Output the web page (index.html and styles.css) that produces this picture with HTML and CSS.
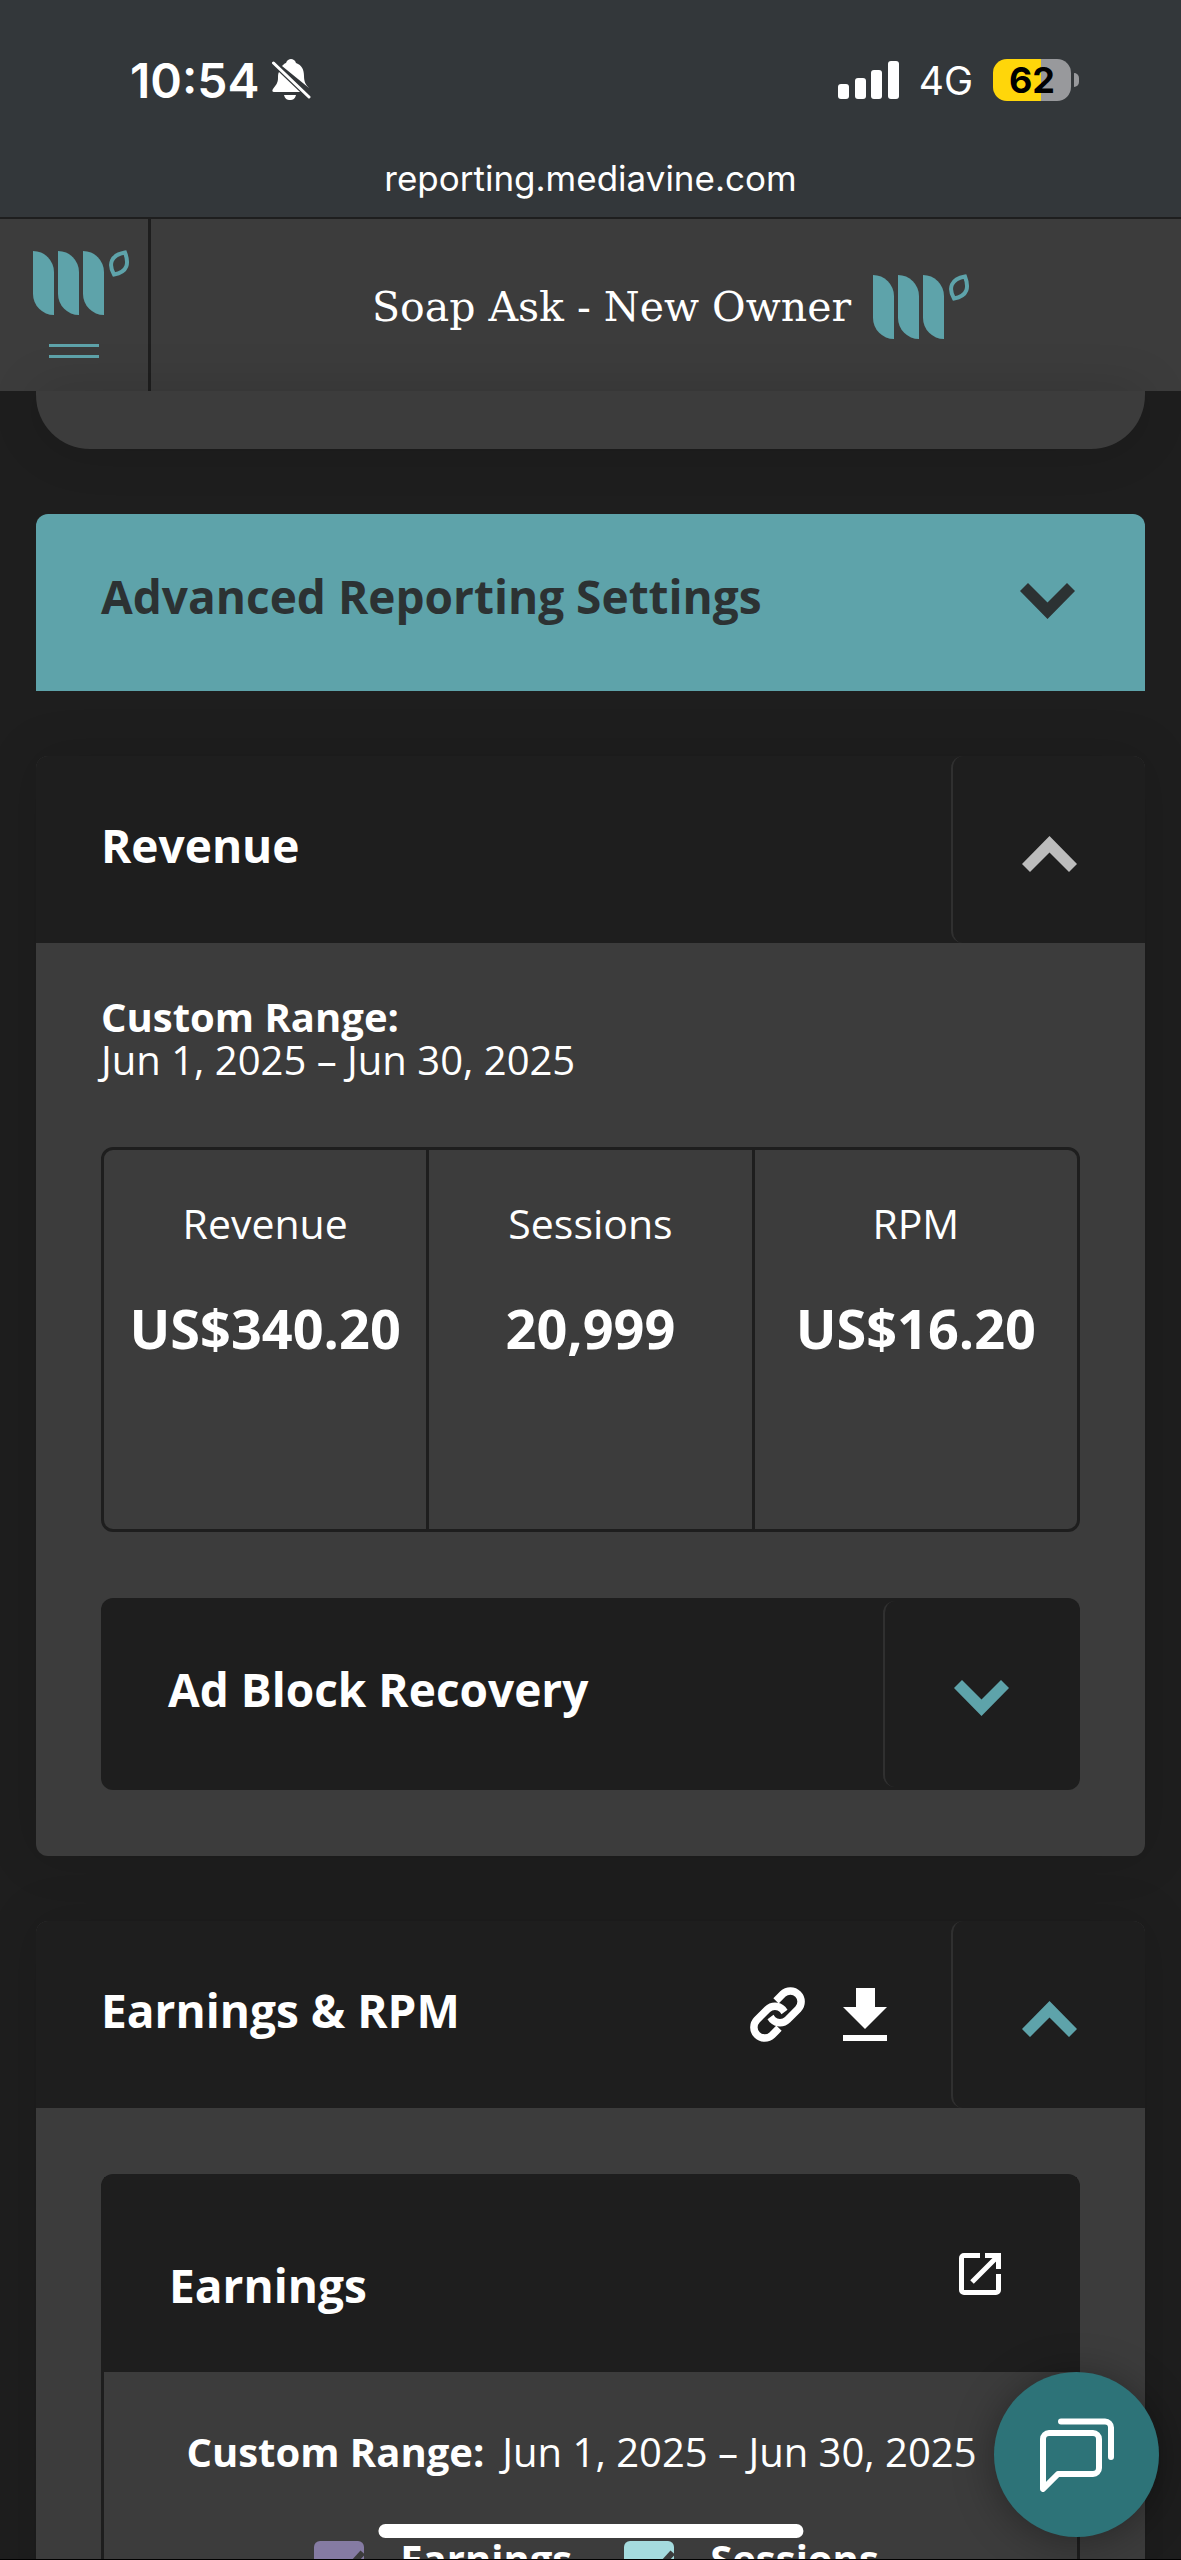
FILE: index.html
```html
<!DOCTYPE html>
<html lang="en">

<head>
	<meta charset="UTF-8">
	<meta name="viewport" content="width=device-width, initial-scale=1.0">
	<title>Soap Ask - New Owner</title>
	<link rel="stylesheet" href="styles.css">
</head>

<body>
	<!-- shared shapes -->
	<svg class="defs" aria-hidden="true">
		<symbol id="logo" viewBox="0 0 111 66">
			<g fill="#5ea3aa">
				<path d="M14 1a21 21 0 0 1 21 21v43a21 21 0 0 1-21-21z" />
				<path d="M39 1a21 21 0 0 1 21 21v43a21 21 0 0 1-21-21z" />
				<path d="M64 1a21 21 0 0 1 21 21v43a21 21 0 0 1-21-21z" />
			</g>
			<path d="M106 2.500C110 13 109 22 95 24.500C89 14 92 5 106 2.500z" fill="none" stroke="#5ea3aa" stroke-width="4" />
		</symbol>
		<symbol id="chevron-up" viewBox="0 0 55 36">
			<path d="M27.500 0L55 28L47 36L27.500 16.500L8 36L0 28z" fill="currentColor" />
		</symbol>
		<symbol id="chevron-down" viewBox="0 0 55 36">
			<path d="M27.500 36L55 8L47 0L27.500 19.500L8 0L0 8z" fill="currentColor" />
		</symbol>
	</svg>

	<div class="screen">
		<div class="status">
			<div class="status-row">
				<div class="status-side">
					<span class="clock">10:54</span>
					<svg width="40" height="42" viewBox="0 0 40 42" fill="#fff">
						<path d="M11 7C13 5 14 4 15 4C16 1 18 0 20 0s4 1 5 4c6 2 8 7 8 13c0 6 2 9 5 12z" />
						<path d="M8 13L29 33H3C1 33 1 31 2 30C5 26 7 24 7 19C7 16 7 15 8 13z" />
						<path d="M13 36H25C24 40 22 41 19 41s-5-1-6-5z" />
						<path d="M2.500 4L38 38" stroke="#fff" stroke-width="3" stroke-linecap="round" />
					</svg>
				</div>
				<div class="status-side">
					<svg width="61" height="38" viewBox="0 0 61 38" fill="#fff">
						<rect x="0" y="23" width="11" height="15" rx="3" />
						<rect x="17" y="17" width="11" height="21" rx="3" />
						<rect x="33" y="9" width="11" height="29" rx="3" />
						<rect x="50" y="0" width="11" height="38" rx="3" />
					</svg>
					<span class="network">4G</span>
					<div class="battery">
						<span class="battery-level">62</span>
						<span class="battery-nub"></span>
					</div>
				</div>
			</div>
			<div class="url">reporting.mediavine.com</div>
		</div>

		<header class="header">
			<button class="menu-button" aria-label="Menu">
				<svg width="111" height="66"><use href="#logo" /></svg>
				<span class="menu-lines"></span>
			</button>
			<div class="site-title">
				<span>Soap Ask - New Owner</span>
				<svg width="111" height="66"><use href="#logo" /></svg>
			</div>
		</header>

		<main class="content">
			<div class="card-end"></div>

			<button class="settings">
				<span class="card-title">Advanced Reporting Settings</span>
				<svg width="55" height="36"><use href="#chevron-down" /></svg>
			</button>

			<section class="card">
				<div class="card-head">
					<h2 class="card-title">Revenue</h2>
					<button class="toggle muted" aria-label="Collapse Revenue">
						<svg width="55" height="36"><use href="#chevron-up" /></svg>
					</button>
				</div>
				<div class="card-body">
					<p class="range"><b>Custom Range:</b><br>Jun 1, 2025 – Jun 30, 2025</p>
					<dl class="metrics">
						<div class="metric">
							<dt>Revenue</dt>
							<dd>US$340.20</dd>
						</div>
						<div class="metric">
							<dt>Sessions</dt>
							<dd>20,999</dd>
						</div>
						<div class="metric">
							<dt>RPM</dt>
							<dd>US$16.20</dd>
						</div>
					</dl>
					<div class="card-head boxed">
						<h3 class="card-title">Ad Block Recovery</h3>
						<button class="toggle" aria-label="Expand Ad Block Recovery">
							<svg width="55" height="36"><use href="#chevron-down" /></svg>
						</button>
					</div>
				</div>
			</section>

			<section class="card">
				<div class="card-head">
					<h2 class="card-title">Earnings &amp; RPM</h2>
					<div class="card-actions">
						<a class="icon-link" href="#" aria-label="Copy link">
							<svg width="55" height="55" viewBox="0 0 55 55" fill="none" stroke="#fff" stroke-width="7.500">
								<path d="M29 41.200L22.100 48.100A10.750 10.750 0 0 1 6.900 32.900L17.400 22.400A10.750 10.750 0 0 1 32.600 22.400L34.500 25" />
								<path d="M26 13.800L32.900 6.900A10.750 10.750 0 0 1 48.100 22.100L37.600 32.600A10.750 10.750 0 0 1 22.400 32.600L20.500 30" />
							</svg>
						</a>
						<button class="icon-button" aria-label="Download">
							<svg width="44" height="53" viewBox="0 0 44 53" fill="#fff">
								<path d="M13 0H32V19H44L22 41L0 19H13z" />
								<path d="M0 47H44V53H0z" />
							</svg>
						</button>
					</div>
					<button class="toggle" aria-label="Collapse Earnings &amp; RPM">
						<svg width="55" height="36"><use href="#chevron-up" /></svg>
					</button>
				</div>
				<div class="card-body chart-body">
					<div class="chart">
						<div class="chart-head">
							<h3 class="card-title">Earnings</h3>
							<a class="icon-link" href="#" aria-label="Open chart">
								<svg width="42" height="42" viewBox="0 0 42 42" fill="none" stroke="#fff" stroke-width="5">
									<path d="M21 2.500H5A2.500 2.500 0 0 0 2.500 5V37A2.500 2.500 0 0 0 5 39.500H37A2.500 2.500 0 0 0 39.500 37V21" />
									<path d="M26 2.500H39.500V16M38 4L13 29" />
								</svg>
							</a>
						</div>
						<p class="chart-range"><b>Custom Range:</b><span>Jun 1, 2025 – Jun 30, 2025</span></p>
						<div class="legend">
							<label class="legend-item"><input class="tick earnings" type="checkbox" checked>Earnings</label>
							<label class="legend-item"><input class="tick sessions" type="checkbox" checked>Sessions</label>
						</div>
					</div>
				</div>
			</section>
		</main>

		<button class="chat" aria-label="Chat">
			<svg width="74" height="74" viewBox="0 0 74 74" fill="none" stroke="#fff" stroke-width="6" stroke-linecap="round" stroke-linejoin="round">
				<path d="M3 71V21A6 6 0 0 1 9 15H53A6 6 0 0 1 59 21V50A6 6 0 0 1 53 56H18z" />
				<path d="M21 3.500H65A6 6 0 0 1 71 9.500V39" />
			</svg>
		</button>
		<div class="home-bar"></div>
	</div>
</body>

</html>
```
FILE: styles.css
```css
* {
	margin: 0;
	padding: 0;
	box-sizing: border-box;
}

body {
	background: #1e1e1e;
	color: white;
	font-family: "Open Sans", sans-serif;
	font-size: 40px;
}

button {
	border: none;
	background: none;
	color: inherit;
	font: inherit;
	cursor: pointer;
}

svg {
	display: block;
	flex-shrink: 0;
}

.defs {
	position: absolute;
	width: 0;
	height: 0;
}

.screen {
	position: relative;
	display: flex;
	flex-direction: column;
	height: 100vh;
	overflow: hidden;
	border-bottom: 1px solid black;
}

/* phone status bar */
.status {
	flex-shrink: 0;
	padding: 52px 0 16px;
	background: #33373a;
	font-family: Inter, sans-serif;
}

.status-row {
	display: flex;
	justify-content: space-between;
	height: 56px;
	padding: 0 102px 0 130px;
}

.status-side {
	display: flex;
	align-items: center;
	gap: 12px;
}

.clock {
	font-size: 48px;
	font-weight: 600;
}

.network {
	margin: 0 8px;
	font-size: 39px;
}

.battery {
	display: flex;
	align-items: center;
	gap: 3px;
}

.battery-level {
	width: 78px;
	border-radius: 14px;
	background: linear-gradient(to right, #ffd60a 62%, #98999c 62%);
	color: black;
	font-size: 36px;
	font-weight: 700;
	line-height: 42px;
	text-align: center;
}

.battery-nub {
	width: 5px;
	height: 14px;
	border-radius: 0 6px 6px 0;
	background: #98999c;
}

.url {
	margin-top: 48px;
	font-size: 35px;
	line-height: 45px;
	text-align: center;
}

/* site header */
.header {
	display: flex;
	flex-shrink: 0;
	border-top: 2px solid #1e1e1e;
	background: #3c3c3c;
}

.menu-button {
	display: flex;
	flex-direction: column;
	align-items: center;
	gap: 28px;
	width: 151px;
	padding: 31px 0 33px;
	border-right: 3px solid #1e1e1e;
}

.menu-lines {
	width: 50px;
	height: 14px;
	border: solid #5ea3aa;
	border-width: 3px 0;
}

.site-title {
	display: flex;
	flex: 1;
	align-items: center;
	justify-content: center;
	gap: 8px;
	padding: 4px 0 0 10px;
	font-family: "DejaVu Serif", serif;
	font-size: 41px;
}

/* cards */
.content {
	display: flex;
	flex-direction: column;
	gap: 65px;
	padding: 0 36px;
}

.card-end {
	flex-shrink: 0;
	height: 58px;
	border-radius: 0 0 54px 54px;
	background: #3c3c3c;
	box-shadow: 0 0 50px rgba(0, 0, 0, 0.15);
}

.settings {
	display: flex;
	flex-shrink: 0;
	align-items: center;
	justify-content: space-between;
	height: 177px;
	padding: 0 70px 4px 65px;
	border-radius: 12px 12px 0 0;
	background: #5ea3aa;
	color: #2c3233;
}

.card {
	flex-shrink: 0;
	border-radius: 12px;
	background: #3c3c3c;
	box-shadow: 0 0 50px rgba(0, 0, 0, 0.15);
}

.card-head {
	display: flex;
	align-items: center;
	height: 187px;
	padding-left: 65px;
	border-radius: 12px 12px 0 0;
	background: #1e1e1e;
}

.card-head.boxed {
	height: 192px;
	padding: 3px 3px 3px 67px;
	border-radius: 12px;
}

.card-title {
	padding-bottom: 10px;
	font-size: 46px;
	font-weight: 700;
	line-height: 60px;
}

.toggle {
	display: flex;
	align-items: center;
	justify-content: center;
	align-self: stretch;
	width: 194px;
	margin-left: auto;
	padding-top: 8px;
	border-left: 2px solid #303030;
	border-radius: 12px;
	color: #5ea3aa;
}

.toggle.muted {
	color: #bcbcbc;
}

.card-actions {
	display: flex;
	align-items: center;
	gap: 38px;
	margin-left: auto;
	padding-right: 64px;
}

.card-actions + .toggle {
	margin-left: 0;
}

.card-body {
	padding: 52px 65px 66px;
}

.range {
	line-height: 43px;
}

.metrics {
	display: flex;
	height: 385px;
	margin: 66px 0;
	border: 3px solid #1e1e1e;
	border-radius: 12px;
}

.metric {
	flex: 1;
	padding-top: 48px;
	text-align: center;
}

.metric + .metric {
	border-left: 3px solid #1e1e1e;
}

.metric dt {
	font-size: 41px;
	line-height: 50px;
}

.metric dd {
	margin-top: 50px;
	font-size: 54px;
	font-weight: 700;
	line-height: 60px;
}

/* earnings chart */
.card-body.chart-body {
	padding-top: 66px;
}

.chart {
	height: 900px;
	border: 3px solid #1e1e1e;
	border-radius: 12px;
}

.chart-head {
	display: flex;
	align-items: center;
	justify-content: space-between;
	height: 195px;
	padding: 0 76px 2px 65px;
	background: #1e1e1e;
}

.chart-head .card-title {
	padding: 22px 0 0;
}

.chart-range {
	display: flex;
	justify-content: center;
	gap: 18px;
	padding: 56px 18px 0 0;
	line-height: 48px;
}

.legend {
	display: flex;
	justify-content: center;
	gap: 52px;
	margin-top: 65px;
	padding-left: 12px;
}

.legend-item {
	display: flex;
	gap: 36px;
	font-weight: 700;
	line-height: 36px;
}

.tick {
	position: relative;
	width: 50px;
	height: 50px;
	border-radius: 6px;
	appearance: none;
}

.tick.earnings {
	background: #857ba3;
}

.tick.sessions {
	background: #a5dbde;
}

.tick:checked::after {
	content: "";
	position: absolute;
	top: 0;
	left: 16px;
	width: 18px;
	height: 36px;
	border: solid #3c3c3c;
	border-width: 0 6px 6px 0;
	transform: rotate(42deg);
}

/* floating items */
.chat {
	position: absolute;
	right: 22px;
	bottom: 22px;
	display: flex;
	align-items: center;
	justify-content: center;
	width: 165px;
	height: 165px;
	border-radius: 50%;
	background: #2d7378;
	box-shadow: 0 4px 40px rgba(0, 0, 0, 0.35);
}

.home-bar {
	position: absolute;
	bottom: 21px;
	left: 50%;
	width: 36%;
	height: 14px;
	border-radius: 7px;
	background: white;
	transform: translateX(-50%);
}
```
